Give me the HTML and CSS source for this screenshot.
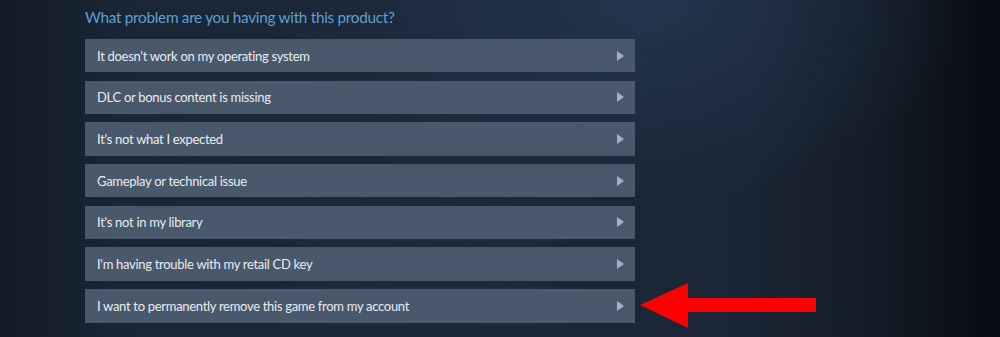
FILE: index.html
```html
<!DOCTYPE html>
<html lang="en">
<head>
    <meta charset="UTF-8">
    <meta name="viewport" content="width=device-width, initial-scale=1.0">
    <title>Steam Support</title>
    <link rel="stylesheet" href="styles.css">
</head>
<body>
    <div class="page">
        <div class="support-panel">
            <h2 class="question">What problem are you having with this product?</h2>
            <div class="options">
                <a class="option" href="#"><span>It doesn't work on my operating system</span><i class="chevron"></i></a>
                <a class="option" href="#"><span>DLC or bonus content is missing</span><i class="chevron"></i></a>
                <a class="option" href="#"><span>It's not what I expected</span><i class="chevron"></i></a>
                <a class="option" href="#"><span>Gameplay or technical issue</span><i class="chevron"></i></a>
                <a class="option" href="#"><span>It's not in my library</span><i class="chevron"></i></a>
                <a class="option" href="#"><span>I'm having trouble with my retail CD key</span><i class="chevron"></i></a>
                <a class="option highlight" href="#"><span>I want to permanently remove this game from my account</span><i class="chevron"></i>
                    <svg class="red-arrow" width="180" height="48" viewBox="0 0 180 48">
                        <polygon points="0,22 48,0 48,15 176,15 176,29 48,29 48,45" fill="#ff0000"/>
                    </svg>
                </a>
            </div>
        </div>
    </div>
</body>
</html>
```

FILE: styles.css
```css
body {
    margin: 0;
    padding: 0;
    font-family: 'Lato', 'Liberation Sans', Arial, sans-serif;
    background-color: #1b2838;
    height: 337px;
    overflow: hidden;
}
.page {
    height: 337px;
    background:
        radial-gradient(ellipse 320px 200px at 650px 0px, rgba(38, 58, 86, 0.7), rgba(38, 58, 86, 0) 100%),
        linear-gradient(to right, #121b27 0%, #1a2636 12%, #1c293a 45%, #1a2535 75%, #131b26 88%, #090c11 100%);
}
.support-panel {
    padding: 6px 0 0 85px;
    width: 550px;
}
.question {
    margin: 0 0 11px 0;
    font-size: 15.3px;
    font-weight: normal;
    letter-spacing: -0.28px;
    color: #5e9fd2;
    line-height: 22px;
}
.options {
    display: flex;
    flex-direction: column;
    gap: 8.3px;
}
.option {
    position: relative;
    display: flex;
    align-items: center;
    justify-content: space-between;
    height: 33.4px;
    padding: 0 11px 0 12px;
    background-color: #4a586c;
    color: #e8ecf1;
    font-size: 13px;
    letter-spacing: -0.3px;
    text-decoration: none;
}
.chevron {
    width: 0;
    height: 0;
    border-top: 5px solid transparent;
    border-bottom: 5px solid transparent;
    border-left: 7px solid #a4b1c4;
}
.red-arrow {
    position: absolute;
    left: 555px;
    top: -6px;
}
```
